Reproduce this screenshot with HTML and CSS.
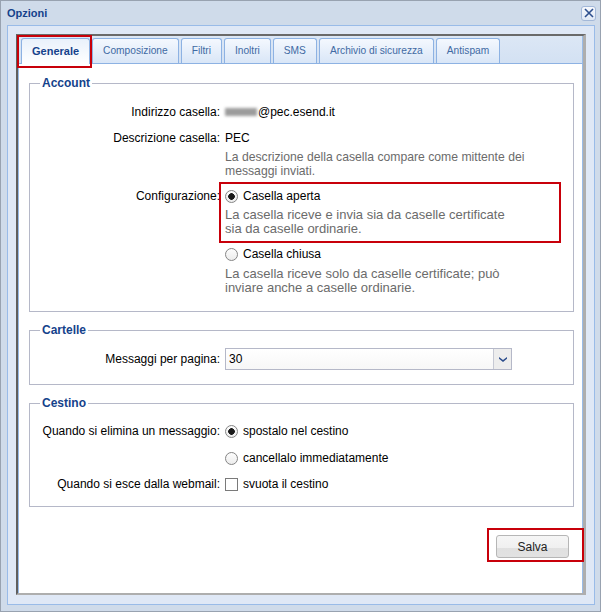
FILE: index.html
```html
<!DOCTYPE html>
<html lang="it">

<head>
    <meta charset="UTF-8">
    <title>Opzioni</title>
    <link rel="stylesheet" href="styles.css">
</head>

<body>

    <div class="window">
        <div class="titlebar">
            <span class="title">Opzioni</span>
            <button class="close" title="Chiudi">
                <svg width="10" height="10" viewBox="0 0 10 10">
                    <path d="M1 1 L9 9 M9 1 L1 9" stroke="#2d4f8e" stroke-width="1.6" fill="none" />
                </svg>
            </button>
        </div>

        <div class="frame">
            <div class="panel">
                <!-- Schede -->
                <ul class="tabs">
                    <li class="tab active marked">Generale</li>
                    <li class="tab">Composizione</li>
                    <li class="tab">Filtri</li>
                    <li class="tab">Inoltri</li>
                    <li class="tab">SMS</li>
                    <li class="tab">Archivio di sicurezza</li>
                    <li class="tab">Antispam</li>
                </ul>

                <div class="tab-body">
                    <fieldset class="account">
                        <legend>Account</legend>
                        <div class="fields">
                            <div class="row">
                                <span class="label">Indirizzo casella:</span>
                                <span class="value"><span class="blurred"></span>@pec.esend.it</span>
                            </div>
                            <div class="row">
                                <span class="label">Descrizione casella:</span>
                                <div class="value">
                                    <div>PEC</div>
                                    <p class="hint">La descrizione della casella compare come mittente dei<br>messaggi inviati.</p>
                                </div>
                            </div>
                            <div class="row">
                                <span class="label">Configurazione:</span>
                                <div class="value options">
                                    <div class="option marked">
                                        <label><input type="radio" name="config" checked> Casella aperta</label>
                                        <p class="hint">La casella riceve e invia sia da caselle certificate<br>sia da caselle ordinarie.</p>
                                    </div>
                                    <div class="option">
                                        <label><input type="radio" name="config"> Casella chiusa</label>
                                        <p class="hint">La casella riceve solo da caselle certificate; può<br>inviare anche a caselle ordinarie.</p>
                                    </div>
                                </div>
                            </div>
                        </div>
                    </fieldset>

                    <fieldset class="folders">
                        <legend>Cartelle</legend>
                        <div class="row">
                            <span class="label">Messaggi per pagina:</span>
                            <div class="combo">
                                <span class="combo-text">30</span>
                                <span class="combo-trigger">
                                    <svg width="8" height="5" viewBox="0 0 8 5">
                                        <path d="M0 0 L4 3 L8 0 L8 1.8 L4 5 L0 1.8 Z" fill="#2b4c8c" />
                                    </svg>
                                </span>
                            </div>
                        </div>
                    </fieldset>

                    <fieldset class="trash">
                        <legend>Cestino</legend>
                        <div class="fields">
                            <div class="row">
                                <span class="label">Quando si elimina un messaggio:</span>
                                <label class="value"><input type="radio" name="trash" checked> spostalo nel cestino</label>
                            </div>
                            <div class="row second">
                                <span class="label"></span>
                                <label class="value"><input type="radio" name="trash"> cancellalo immediatamente</label>
                            </div>
                            <div class="row">
                                <span class="label">Quando si esce dalla webmail:</span>
                                <label class="value"><input type="checkbox"> svuota il cestino</label>
                            </div>
                        </div>
                    </fieldset>

                    <div class="actions">
                        <button class="btn marked">Salva</button>
                    </div>
                </div>
            </div>
        </div>
    </div>

</body>

</html>
```

FILE: styles.css
```css
body {
    margin: 0;
    font-family: 'Liberation Sans', Arial, sans-serif;
    font-size: 12px;
    color: #000;
    background-color: #fff;
}

.window {
    width: 601px;
    height: 612px;
    box-sizing: border-box;
    border: 1px solid #98a2b0;
    background-color: #cfdbea;
    display: flex;
    flex-direction: column;
}

.titlebar {
    height: 24px;
    display: flex;
    align-items: center;
    justify-content: space-between;
    padding: 0 4px 0 6px;
    flex-shrink: 0;
}

.title {
    font-weight: bold;
    font-size: 11px;
    color: #15428b;
}

.close {
    width: 15px;
    height: 15px;
    padding: 0;
    border: 1px solid #a3b8d8;
    border-radius: 3px;
    background: linear-gradient(#f7f9fd, #dfe8f5);
    display: flex;
    align-items: center;
    justify-content: center;
}

.frame {
    flex: 1;
    margin: 0 5px 6px 6px;
    border: 1px solid #99bbe8;
    background-color: #dfe8f6;
    padding: 8px 8px 9px 8px;
    display: flex;
}

.panel {
    flex: 1;
    display: flex;
    flex-direction: column;
    border-left: 2px solid #5f5f5f;
    border-top: 2px solid #6a6a6a;
    border-right: 3px solid #aeaeae;
    border-bottom: 2px solid #aeaeae;
}

/* Schede */
.tabs {
    list-style: none;
    margin: 0;
    padding: 2px 0 0 2px;
    display: flex;
    gap: 2px;
    background: linear-gradient(#dce7f5, #d3e1f3);
    border-left: 1px solid #99bbe8;
    border-right: 1px solid #99bbe8;
    border-bottom: 1px solid #8db2e3;
}

.tab {
    position: relative;
    height: 24px;
    line-height: 24px;
    padding: 0 10px;
    font-size: 10.2px;
    color: #416aa3;
    border: 1px solid #8db2e3;
    border-bottom: none;
    border-radius: 3px 3px 0 0;
    background: linear-gradient(#f4f8fe, #d9e6f7);
}

.tab.active {
    font-weight: bold;
    font-size: 11px;
    padding: 0 10px;
    color: #15428b;
    background: linear-gradient(#e9f1fb, #fff);
    margin-bottom: -1px;
    height: 25px;
}

.tab-body {
    flex: 1;
    background-color: #fff;
    border-left: 1px solid #99bbe8;
    border-right: 1px solid #99bbe8;
    padding: 12px 8px 0 10px;
}

fieldset {
    margin: 0 0 11px 0;
    padding: 14px 10px 16px;
    border: 1px solid #b5b8c8;
    min-width: 0;
}

legend {
    padding: 0 2px;
    font-weight: bold;
    color: #15428b;
    line-height: 14px;
}

fieldset.folders {
    padding-top: 11px;
    padding-bottom: 14px;
}

fieldset.trash {
    padding-top: 13px;
    padding-bottom: 14px;
}

.fields {
    display: flex;
    flex-direction: column;
    gap: 10px;
}

.trash .row.second {
    margin-top: 1px;
}

.row {
    display: grid;
    grid-template-columns: 180px 1fr;
    column-gap: 5px;
    line-height: 16px;
    align-items: center;
}

.row .label {
    text-align: right;
    white-space: nowrap;
    align-self: start;
}

.folders .row .label {
    align-self: center;
}

.value {
    display: flex;
    flex-direction: column;
    align-items: flex-start;
}

span.value,
label.value {
    flex-direction: row;
    align-items: center;
}

.blurred {
    display: inline-block;
    width: 32px;
    height: 8px;
    margin-right: 1px;
    background-color: #9c9c9c;
    filter: blur(1.4px);
}

.hint {
    margin: 4px 0 0;
    font-size: 12.2px;
    line-height: 14px;
    color: #6b6b6b;
}

/* le note delle opzioni sono un po' piu grandi */
.option .hint {
    font-size: 13px;
}

.options {
    gap: 10px;
}

.option {
    position: relative;
    align-self: stretch;
}

.option + .option .hint {
    margin-top: 5px;
}

.option label {
    display: flex;
    align-items: center;
}

input[type="radio"],
input[type="checkbox"] {
    appearance: none;
    width: 13px;
    height: 13px;
    margin: 0 5px 0 0;
    border: 1px solid #858585;
    background: linear-gradient(#fdfdfd, #ececec);
    flex-shrink: 0;
}

input[type="radio"] {
    border-radius: 50%;
}

input[type="radio"]:checked {
    background: radial-gradient(circle, #1a1a1a 0 3px, transparent 3.6px), linear-gradient(#fdfdfd, #ececec);
}

input[type="checkbox"] {
    border-color: #7a7a7a;
    background: #fff;
}

/* Combo */
.combo {
    display: flex;
    width: 287px;
    height: 22px;
    box-sizing: border-box;
    border: 1px solid #b5b8c8;
}

.combo-text {
    flex: 1;
    padding-left: 3px;
    line-height: 20px;
    background: linear-gradient(#fff, #f7f7f7);
}

.combo-trigger {
    width: 17px;
    border-left: 1px solid #c6c9d4;
    background-color: #ededed;
    display: flex;
    align-items: center;
    justify-content: center;
}

.actions {
    display: flex;
    justify-content: flex-end;
    padding: 17px 5px 0 0;
}

.btn {
    position: relative;
    width: 73px;
    height: 23px;
    padding: 0;
    font-family: 'Liberation Sans', Arial, sans-serif;
    font-size: 12px;
    color: #222;
    border: 1px solid #b6b6b6;
    border-radius: 3px;
    background: linear-gradient(#f6f6f6 0, #f0f0f0 55%, #e0e0e0 55%, #e2e2e2 100%);
}

/* Riquadri rossi di evidenza */
.marked::after {
    content: '';
    position: absolute;
    border: 2px solid #c8000a;
    pointer-events: none;
}

.tab.marked::after {
    top: -4px;
    right: -3px;
    bottom: -4px;
    left: -5px;
}

.option.marked::after {
    top: -6px;
    right: 2px;
    bottom: -7px;
    left: -6px;
}

.btn.marked::after {
    top: -8px;
    right: -16px;
    bottom: -5px;
    left: -10px;
}
```
